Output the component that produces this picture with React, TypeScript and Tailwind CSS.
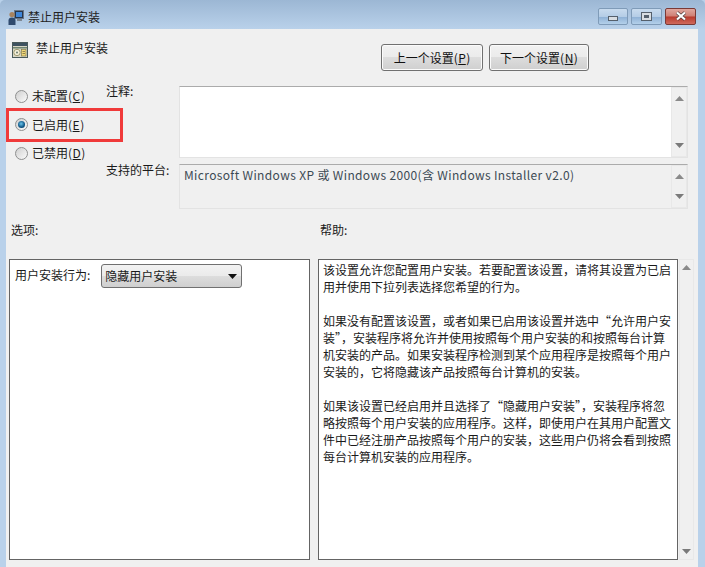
import type { ReactNode } from "react"

const helpLines = [
  "该设置允许您配置用户安装。若要配置该设置，请将其设置为已启",
  "用并使用下拉列表选择您希望的行为。",
  "",
  "如果没有配置该设置，或者如果已启用该设置并选中“允许用户安",
  "装”，安装程序将允许并使用按照每个用户安装的和按照每台计算",
  "机安装的产品。如果安装程序检测到某个应用程序是按照每个用户",
  "安装的，它将隐藏该产品按照每台计算机的安装。",
  "",
  "如果该设置已经启用并且选择了“隐藏用户安装”，安装程序将忽",
  "略按照每个用户安装的应用程序。这样，即使用户在其用户配置文",
  "件中已经注册产品按照每个用户的安装，这些用户仍将会看到按照",
  "每台计算机安装的应用程序。",
]

function ArrowUp() {
  return (
    <svg width="9" height="5" viewBox="0 0 9 5">
      <path d="M4.5 0 L9 5 H0 Z" fill="#8a8a8a" />
    </svg>
  )
}

function ArrowDown() {
  return (
    <svg width="9" height="5" viewBox="0 0 9 5">
      <path d="M0 0 H9 L4.5 5 Z" fill="#7a7a7a" />
    </svg>
  )
}

function ScrollBar({ className }: { className: string }) {
  return (
    <div className={`flex flex-col items-center justify-between bg-[#f0f0f0] border border-[#e8e8e8] ${className}`}>
      <ArrowUp />
      <ArrowDown />
    </div>
  )
}

function Radio({ label, hot, checked }: { label: string; hot: string; checked?: boolean }) {
  return (
    <div className="flex items-center h-[28.5px]">
      <span className="flex items-center justify-center w-[13px] h-[13px] rounded-full border border-[#8e8f8f] bg-gradient-to-br from-[#cfcfcf] to-[#fbfbfb]">
        {checked && <span className="w-[7px] h-[7px] rounded-full bg-[radial-gradient(circle_at_45%_40%,#6cc4ea,#0d5585_60%,#0a3350)]" />}
      </span>
      <span className="ml-[4px]">
        {label}(<span className="underline mx-[0.5px]">{hot}</span>)
      </span>
    </div>
  )
}

function SettingButton({ children, width }: { children: ReactNode; width: string }) {
  return (
    <button className={`h-[27px] ${width} flex items-center justify-center rounded-[3px] border border-[#707070] shadow-[inset_0_0_0_1px_#fbfbfb] bg-[linear-gradient(#f2f2f2_0%,#ebebeb_48%,#dddddd_50%,#cfcfcf_100%)] text-[#111]`}>
      {children}
    </button>
  )
}

function TitleIcon() {
  return (
    <svg width="16" height="15" viewBox="0 0 16 15">
      <rect x="6.5" y="0.5" width="9" height="8" fill="#26354a" stroke="#6a7686" />
      <rect x="8" y="2" width="6" height="5" fill="#3f86d8" />
      <rect x="9" y="9" width="5" height="2" fill="#7e8894" />
      <circle cx="4" cy="4.5" r="2.6" fill="#a8835f" />
      <path d="M0.5 15 V10.5 Q0.5 7.5 4 7.5 Q7.5 7.5 7.5 10.5 V15 Z" fill="#2f4a6e" />
    </svg>
  )
}

function PolicyIcon() {
  return (
    <svg width="16" height="16" viewBox="0 0 16 16">
      <rect x="0.5" y="0.5" width="15" height="15" fill="#d8d6c4" stroke="#4a5a5a" />
      <rect x="1" y="1" width="14" height="3" fill="#3e5260" />
      <rect x="1" y="5" width="14" height="1.5" fill="#6f8470" />
      <circle cx="5" cy="10.5" r="3.2" fill="#f3efd8" stroke="#a09a70" />
      <circle cx="5" cy="10.5" r="1" fill="#6a7a70" />
      <rect x="9.5" y="7.5" width="4.5" height="6.5" fill="#f0d878" stroke="#7a7040" strokeWidth="0.6" />
      <path d="M10.5 9.5 H13 M10.5 11.5 H13" stroke="#6a6040" strokeWidth="0.7" />
    </svg>
  )
}

function WindowButtons() {
  return (
    <div className="flex gap-[3px]">
      <div className="flex items-center justify-center w-[30px] h-[17px] rounded-[2px] border border-[#7f9bb8] bg-[linear-gradient(#c8dbee_0%,#b5cde6_50%,#90b2d6_55%,#b4d0ea_100%)]">
        <div className="w-[10px] h-[5px] mt-[4px] bg-[#d8dde2] border border-[#55606c]" />
      </div>
      <div className="flex items-center justify-center w-[31px] h-[17px] rounded-[2px] border border-[#7f9bb8] bg-[linear-gradient(#c8dbee_0%,#b5cde6_50%,#90b2d6_55%,#b4d0ea_100%)]">
        <div className="w-[11px] h-[9px] bg-[#d8dde2] border border-[#55606c] flex items-center justify-center">
          <div className="w-[5px] h-[3px] bg-[#55606c]" />
        </div>
      </div>
      <div className="flex items-center justify-center w-[31px] h-[17px] rounded-[2px] border border-[#7a3a36] bg-[linear-gradient(#e0a79e_0%,#cf7f74_48%,#b8392c_52%,#cf6a5c_100%)]">
        <svg width="12" height="10" viewBox="0 0 12 10">
          <path d="M2 1.5 L10 8.5 M10 1.5 L2 8.5" stroke="#4a3a3a" strokeWidth="3.4" />
          <path d="M2 1.5 L10 8.5 M10 1.5 L2 8.5" stroke="#ffffff" strokeWidth="2.2" />
        </svg>
      </div>
    </div>
  )
}

export default function App() {
  return (
    <div className="relative flex flex-col w-[705px] h-[567px] overflow-hidden bg-[#b9d1ea] text-[12px] leading-[16px] text-[#1a1a1a] font-['Noto_Sans_CJK_SC','Liberation_Sans',sans-serif]">
      <div className="flex items-center h-[29px] shrink-0 pt-[5px] pl-[8px] pr-[9px] rounded-t-[5px] bg-[linear-gradient(#9cb7d4,#b9d1ea)]">
        <TitleIcon />
        <span className="ml-[4px] text-[#222]">禁止用户安装</span>
        <div className="ml-auto -mt-[2px]">
          <WindowButtons />
        </div>
      </div>

      <div className="flex-1 ml-[6px] mr-[7px] flex flex-col bg-[#f0f0f0]">
        <div className="flex h-[57px] shrink-0">
          <div className="ml-[6px] mt-[13px]">
            <PolicyIcon />
          </div>
          <span className="ml-[8px] mt-[11px] h-[16px]">禁止用户安装</span>
          <div className="ml-auto mr-[109px] mt-[15px] flex gap-[6px] h-[27px]">
            <SettingButton width="w-[102px]">
              上一个设置(<span className="underline mx-[0.5px]">P</span>)
            </SettingButton>
            <SettingButton width="w-[100px]">
              下一个设置(<span className="underline mx-[0.5px]">N</span>)
            </SettingButton>
          </div>
        </div>

        <div className="flex shrink-0">
          <div className="w-[100px] pl-[9px] -mt-[4px]">
            <Radio label="未配置" hot="C" />
            <Radio label="已启用" hot="E" checked />
            <Radio label="已禁用" hot="D" />
          </div>
          <div className="w-[73px] flex flex-col">
            <span className="mt-[-3px] h-[79px]">注释:</span>
            <span>支持的平台:</span>
          </div>
          <div className="w-[509px] flex flex-col gap-[6px]">
            <div className="flex justify-end h-[72px] bg-white border border-[#e3e3e3] border-t-[#ababab]">
              <ScrollBar className="w-[16px] py-[8px]" />
            </div>
            <div className="flex h-[45px] bg-[#f0f0f0] border border-[#e3e3e3] border-t-[#ababab]">
              <span className="flex-1 pl-[4px] pt-[2px] text-[#3c4a54] tracking-[0.36px]">
                Microsoft Windows XP 或 Windows 2000(含 Windows Installer v2.0)
              </span>
              <ScrollBar className="w-[16px] py-[8px]" />
            </div>
          </div>
        </div>

        <div className="flex h-[50px] shrink-0 pt-[13px]">
          <span className="ml-[5px] w-[309px]">选项:</span>
          <span>帮助:</span>
        </div>

        <div className="flex h-[301px] shrink-0 ml-[3px]">
          <div className="w-[301px] flex items-start pl-[5px] pt-[4px] bg-white border border-[#646464]">
            <span className="mt-[3px]">用户安装行为:</span>
            <div className="ml-[11px] flex items-center justify-between w-[141px] h-[24px] pl-[3px] pr-[4px] rounded-[3px] border border-[#707070] bg-[linear-gradient(#f2f2f2_0%,#ebebeb_48%,#dddddd_50%,#cfcfcf_100%)]">
              <span>隐藏用户安装</span>
              <svg width="9" height="5" viewBox="0 0 9 5">
                <path d="M0 0 H9 L4.5 5 Z" fill="#111" />
              </svg>
            </div>
          </div>
          <div className="ml-[8px] w-[360px] pl-[4px] pt-[1px] bg-white border border-[#646464] whitespace-pre leading-[17px]">
            {helpLines.map((line, i) => (
              <div key={i} className="h-[17px]">
                {line}
              </div>
            ))}
          </div>
          <ScrollBar className="ml-[1px] w-[15px] py-[5px]" />
        </div>
      </div>

      <div className="absolute left-[6px] top-[108px] w-[117px] h-[34px] border-[3px] border-[#f03a3a]" />
    </div>
  )
}
